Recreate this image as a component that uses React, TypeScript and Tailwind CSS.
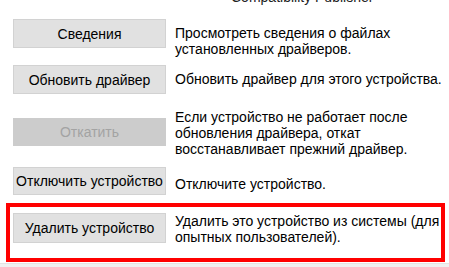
import React from "react";

const font = { fontFamily: '"Liberation Sans", Arial, sans-serif' };

function Btn({ label, disabled, h = "h-[29px]" }: { label: string; disabled?: boolean; h?: string }) {
  return (
    <div
      className={`w-[153px] ${h} shrink-0 flex items-center justify-center border text-[14px] ${
        disabled
          ? "bg-[#cccccc] border-[#cccccc] text-[#a3a3a3]"
          : "bg-[#e1e1e1] border-[#d2d2d2] text-black"
      }`}
    >
      {label}
    </div>
  );
}

export default function App() {
  return (
    <div className="w-[449px] h-[267px] bg-white overflow-hidden relative text-black leading-[16px]" style={font}>
      <div className="pl-[231px] -mt-[11px] h-[16px] text-[14px] text-[#222] whitespace-nowrap">Compatibility Publisher</div>
      <div className="pl-[13px] pt-[14px] flex flex-col">
        <div className="flex items-start gap-[9px]">
          <Btn label="Сведения" />
          <div className="mt-[6px] text-[14px]">
            Просмотреть сведения о файлах
            <br />
            установленных драйверов.
          </div>
        </div>
        <div className="flex items-start gap-[9px] mt-[8px]">
          <Btn label="Обновить драйвер" />
          <div className="mt-[6px] text-[14px]">Обновить драйвер для этого устройства.</div>
        </div>
        <div className="flex items-start gap-[9px] mt-[15px]">
          <div className="mt-[9px]">
            <Btn label="Откатить" disabled h="h-[28px]" />
          </div>
          <div className="text-[14px]">
            Если устройство не работает после
            <br />
            обновления драйвера, откат
            <br />
            восстанавливает прежний драйвер.
          </div>
        </div>
        <div className="flex items-start gap-[9px] mt-[10px]">
          <Btn label="Отключить устройство" h="h-[28px]" />
          <div className="mt-[9px] text-[14px]">Отключите устройство.</div>
        </div>
      </div>
      <div className="ml-[6px] mt-[8px] w-[439px] h-[59px] border-4 border-[#ff0000] pl-[3px] pt-[6px] flex items-start gap-[9px]">
        <Btn label="Удалить устройство" h="h-[30px]" />
        <div className="text-[14px]">
          Удалить это устройство из системы (для
          <br />
          опытных пользователей).
        </div>
      </div>
      <div className="mt-[1px] h-[4px] bg-[#f0f0f0] border-t border-[#e3e3e3]" />
    </div>
  );
}
